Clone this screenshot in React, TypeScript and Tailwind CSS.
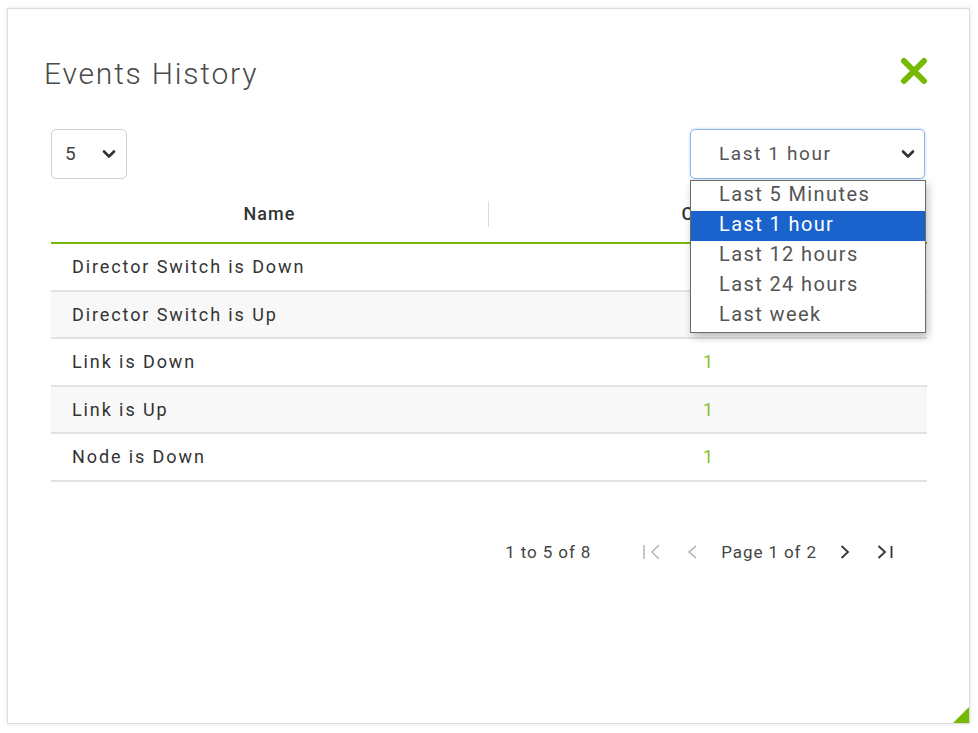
import React from "react";

const Chevron = ({ className = "" }: { className?: string }) => (
  <svg width="14" height="10" viewBox="0 0 14 10" className={className}>
    <path d="M2 2.5 L7 7.5 L12 2.5" fill="none" stroke="#333" strokeWidth="2.6" strokeLinecap="round" strokeLinejoin="round" />
  </svg>
);

const rows = [
  "Director Switch is Down",
  "Director Switch is Up",
  "Link is Down",
  "Link is Up",
  "Node is Down",
];

const options = ["Last 5 Minutes", "Last 1 hour", "Last 12 hours", "Last 24 hours", "Last week"];

export default function App() {
  return (
    <div
      className="w-[978px] h-[733px] bg-white pl-[7px] pt-[8px] overflow-hidden"
      style={{ fontFamily: "Roboto, 'Liberation Sans', sans-serif" }}
    >
      <div className="relative w-[963px] h-[716px] border border-[#dcdcdc] bg-white shadow-[0_0_4px_rgba(0,0,0,0.12)]">
        {/* header */}
        <div className="flex items-start justify-between pl-[36px] pr-[41px] pt-[47px]">
          <h1 className="text-[30px] font-light leading-[36px] text-[#4a4a4a] tracking-[1.8px]">Events History</h1>
          <svg width="28" height="28" viewBox="0 0 28 28" className="mt-[1px]">
            <path d="M4 4 L24 24 M24 4 L4 24" stroke="#76b900" strokeWidth="6" strokeLinecap="round" />
          </svg>
        </div>

        {/* controls */}
        <div className="flex items-center justify-between pl-[43px] pr-[44px] mt-[37px]">
          <div className="w-[76px] h-[50px] border border-[#cfcfcf] rounded-[5px] flex items-center justify-between pl-[13px] pr-[10px] text-[19px] text-[#444]">
            <span>5</span>
            <Chevron />
          </div>
          <div className="relative">
            <div className="w-[235px] h-[50px] border border-[#8ab8e8] rounded-[5px] shadow-[0_0_3px_rgba(80,150,230,0.45)] flex items-center justify-between pl-[28px] pr-[9px] text-[19px] text-[#555] tracking-[1.6px]">
              <span>Last 1 hour</span>
              <Chevron />
            </div>
            <div className="absolute left-0 top-[51px] z-10 w-[236px] bg-white border border-[#6b6b6b] shadow-[2px_4px_8px_rgba(0,0,0,0.25)] pb-[1px]">
              {options.map((o, i) => (
                <div
                  key={o}
                  className={
                    i === 1
                      ? "h-[30px] flex items-center pl-[28px] pb-[5px] text-[20px] tracking-[1.4px] bg-[#1a62cc] text-white"
                      : "h-[30px] flex items-center pl-[28px] pb-[5px] text-[20px] tracking-[1.4px] text-[#555]"
                  }
                >
                  {o}
                </div>
              ))}
            </div>
          </div>
        </div>

        {/* table */}
        <div className="ml-[43px] w-[876px] mt-[11px]">
          <div className="flex h-[54px] items-center pb-[4px] border-b-2 border-[#76b900]">
            <div className="w-[437px] flex items-center justify-center text-[18px] font-medium text-[#333] tracking-[1px] pb-[2px]">Name</div>
            <div className="w-px h-[26px] bg-[#dcdcdc]" />
            <div className="flex-1 flex items-center justify-center text-[18px] font-medium text-[#333] tracking-[1px] pb-[2px]">Count</div>
          </div>
          {rows.map((r, i) => (
            <div
              key={r}
              className={
                i % 2 === 1
                  ? "flex h-[47.5px] items-center border-b-2 border-[#e2e2e2] bg-[#f8f8f8]"
                  : "flex h-[47.5px] items-center border-b-2 border-[#e2e2e2] bg-white"
              }
            >
              <div className="w-[438px] pl-[21px] text-[18px] text-[#333] tracking-[1.9px]">{r}</div>
              <div className="flex-1 flex justify-center text-[18px] text-[#8cbf2a]">1</div>
            </div>
          ))}
        </div>

        {/* pagination */}
        <div className="flex items-center justify-end pr-[76px] mt-[58px] text-[17px] text-[#444] tracking-[0.9px]">
          <span>1 to 5 of 8</span>
          <svg width="18" height="18" viewBox="0 0 18 18" className="ml-[52px]">
            <path d="M1 2 V16" stroke="#b8b8b8" strokeWidth="1.6" />
            <path d="M16 2 L9 9 L16 16" fill="none" stroke="#b8b8b8" strokeWidth="1.6" />
          </svg>
          <svg width="10" height="18" viewBox="0 0 10 18" className="ml-[26px]">
            <path d="M9 3 L2 9 L9 15" fill="none" stroke="#b0b0b0" strokeWidth="1.6" />
          </svg>
          <span className="ml-[24px]">Page 1 of 2</span>
          <svg width="10" height="18" viewBox="0 0 10 18" className="ml-[23px]">
            <path d="M1.5 3 L8 9 L1.5 15" fill="none" stroke="#333" strokeWidth="1.8" />
          </svg>
          <svg width="16" height="18" viewBox="0 0 16 18" className="ml-[27px]">
            <path d="M1.5 3 L8 9 L1.5 15" fill="none" stroke="#333" strokeWidth="1.8" />
            <path d="M14.5 3 V15" stroke="#333" strokeWidth="1.8" />
          </svg>
        </div>

        {/* resize corner */}
        <svg width="16" height="16" viewBox="0 0 16 16" className="absolute right-0 bottom-0">
          <path d="M16 0 L16 16 L0 16 Z" fill="#76b900" />
        </svg>
      </div>
    </div>
  );
}
